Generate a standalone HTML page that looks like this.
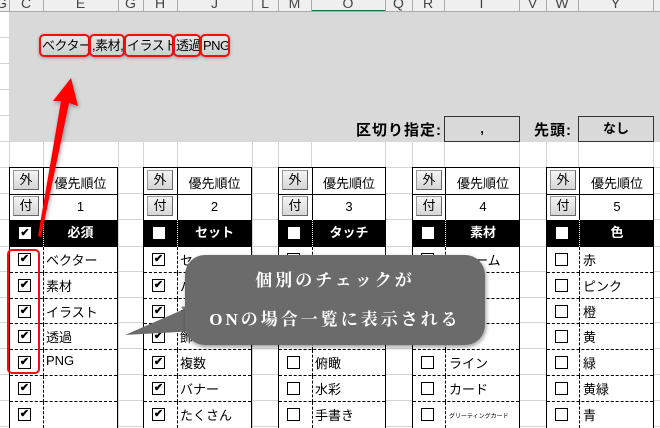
<!DOCTYPE html>
<html><head><meta charset="utf-8"><style>
*{margin:0;padding:0;box-sizing:border-box}
body{width:660px;height:428px;overflow:hidden;position:relative;background:#fff;font-family:"Liberation Sans","Noto Sans CJK JP",sans-serif;font-size:12px;color:#000}
.hl{position:absolute;left:0;width:660px;height:1px;background:#d4d4d4}
.vl{position:absolute;top:0;height:428px;width:1px;background:#d4d4d4}
.colh{position:absolute;top:0;left:0;width:660px;height:12px;background:#efefef;border-bottom:1px solid #ababab;overflow:hidden}
.colh span{position:absolute;top:-5px;font-size:14px;color:#444;text-align:center}
.colh i{position:absolute;top:0;height:12px;width:1px;background:#ababab}
.gray{position:absolute;left:9px;top:12px;width:651px;height:130px;background:#d9d9d9}
.tag{position:absolute;top:34px;height:23px;border:2px solid #f01010;border-radius:5px;background:linear-gradient(#e8e8e8,#cfcfcf);font-size:13px;line-height:19px;padding-left:1px;white-space:nowrap;overflow:hidden;letter-spacing:-0.5px;box-shadow:0 1px 3px rgba(0,0,0,.3)}
.lbl{position:absolute;top:119px;font-size:15px;font-weight:bold;letter-spacing:1px}
.box{position:absolute;top:116px;height:26px;border:1px solid #333;background:#d9d9d9;text-align:center;font-weight:bold;font-size:13px;line-height:24px}
.tb{position:absolute;top:167px;width:109px;height:261px;border:1.5px solid #000;border-bottom:none;background:#fff}
.tb .div{position:absolute;left:33px;top:0;width:1px;height:52px;background:#000}
.btn{position:absolute;left:3px;width:26px;height:20px;background:linear-gradient(#f4f4f4,#d6d6d6);border:1px solid #999;border-right-color:#666;border-bottom-color:#666;font-size:13px;text-align:center;line-height:18px}
.h1{position:absolute;left:34px;right:0;text-align:center;font-size:13px}
.hd{position:absolute;left:0;right:0;top:52px;height:27px;background:#000;color:#fff;font-weight:bold;font-size:13px}
.hd .t{position:absolute;left:34px;right:0;text-align:center;line-height:26px}
.hd .dv{position:absolute;left:33px;top:0;height:27px;border-left:1px dotted #fff}
.hd .c{position:absolute;left:9px;top:7px;width:12px;height:12px;background:#fff;color:#000;font-size:11px;line-height:12px;text-align:center}
.r{position:absolute;left:0;right:0;height:26px;border-top:1px dashed #000}
.r .dv{position:absolute;left:33px;top:0;height:26px;border-left:1px dashed #000}
.r .c{position:absolute;left:8px;top:6px;width:13px;height:13px;border:1.2px solid #000;font-size:11px;line-height:11px;text-align:center;font-weight:bold}
.r .t{position:absolute;left:36px;top:3px;font-size:13px;white-space:nowrap}
</style></head><body>
<div class="hl" style="top:37px"></div><div class="hl" style="top:63px"></div><div class="hl" style="top:89px"></div><div class="hl" style="top:115px"></div><div class="hl" style="top:141px"></div><div class="hl" style="top:167px"></div><div class="hl" style="top:193px"></div><div class="hl" style="top:219px"></div><div class="hl" style="top:246px"></div><div class="hl" style="top:271px"></div><div class="hl" style="top:297px"></div><div class="hl" style="top:322px"></div><div class="hl" style="top:348px"></div><div class="hl" style="top:374px"></div><div class="hl" style="top:400px"></div><div class="hl" style="top:426px"></div>
<div class="vl" style="left:9px"></div><div class="vl" style="left:43px"></div><div class="vl" style="left:118px"></div><div class="vl" style="left:143px"></div><div class="vl" style="left:177px"></div><div class="vl" style="left:252px"></div><div class="vl" style="left:278px"></div><div class="vl" style="left:311px"></div><div class="vl" style="left:385px"></div><div class="vl" style="left:412px"></div><div class="vl" style="left:444px"></div><div class="vl" style="left:519px"></div><div class="vl" style="left:546px"></div><div class="vl" style="left:578px"></div><div class="vl" style="left:653px"></div>
<div class="colh">
<i style="left:9px"></i><i style="left:43px"></i><i style="left:118px"></i><i style="left:143px"></i><i style="left:177px"></i><i style="left:252px"></i><i style="left:278px"></i><i style="left:311px"></i><i style="left:385px"></i><i style="left:412px"></i><i style="left:444px"></i><i style="left:519px"></i><i style="left:546px"></i><i style="left:578px"></i><i style="left:653px"></i>
<span style="left:-4px;width:10px">G</span><span style="left:9px;width:34px">C</span><span style="left:43px;width:75px">E</span><span style="left:118px;width:25px">G</span><span style="left:143px;width:34px">H</span><span style="left:177px;width:75px">J</span><span style="left:252px;width:26px">L</span><span style="left:278px;width:33px">M</span><span style="left:311px;width:74px">O</span><span style="left:385px;width:27px">Q</span><span style="left:412px;width:32px">R</span><span style="left:444px;width:75px">I</span><span style="left:519px;width:27px">V</span><span style="left:546px;width:32px">W</span><span style="left:578px;width:75px">Y</span>
<div style="position:absolute;left:312px;top:10px;width:73px;height:2px;background:#217346"></div>
</div>
<div class="gray"></div>
<div class="tag" style="left:39px;width:51px">ベクター</div>
<div class="tag" style="left:89px;width:36px">,素材,</div>
<div class="tag" style="left:124px;width:50px">イラスト</div>
<div class="tag" style="left:173px;width:28px">透過</div>
<div class="tag" style="left:200px;width:30px">PNG</div>
<div class="lbl" style="left:356px">区切り指定:</div>
<div class="box" style="left:444px;width:76px">,</div>
<div class="lbl" style="left:534px">先頭:</div>
<div class="box" style="left:578px;width:76px">なし</div>

<div class="tb" style="left:9px">
<div class="div"></div>
<div class="btn" style="top:2px">外</div><div class="h1" style="top:5px">優先順位</div>
<div style="position:absolute;left:0;right:0;top:26px;border-top:1px solid #000"></div>
<div class="btn" style="top:28px">付</div><div class="h1" style="top:31px">1</div>
<div class="hd"><div class="c">✔</div><div class="dv"></div><div class="t">必須</div></div>
<div class="r" style="top:79px;border-top:none"><div class="c">✔</div><div class="dv"></div><div class="t">ベクター</div></div>
<div class="r" style="top:104px"><div class="c">✔</div><div class="dv"></div><div class="t">素材</div></div>
<div class="r" style="top:130px"><div class="c">✔</div><div class="dv"></div><div class="t">イラスト</div></div>
<div class="r" style="top:155px"><div class="c">✔</div><div class="dv"></div><div class="t">透過</div></div>
<div class="r" style="top:181px"><div class="c">✔</div><div class="dv"></div><div class="t">PNG</div></div>
<div class="r" style="top:207px"><div class="c">✔</div><div class="dv"></div><div class="t"></div></div>
<div class="r" style="top:233px"><div class="c">✔</div><div class="dv"></div><div class="t"></div></div>
</div>
<div class="tb" style="left:143px">
<div class="div"></div>
<div class="btn" style="top:2px">外</div><div class="h1" style="top:5px">優先順位</div>
<div style="position:absolute;left:0;right:0;top:26px;border-top:1px solid #000"></div>
<div class="btn" style="top:28px">付</div><div class="h1" style="top:31px">2</div>
<div class="hd"><div class="c"></div><div class="dv"></div><div class="t">セット</div></div>
<div class="r" style="top:79px;border-top:none"><div class="c">✔</div><div class="dv"></div><div class="t">セット</div></div>
<div class="r" style="top:104px"><div class="c">✔</div><div class="dv"></div><div class="t">パーツ</div></div>
<div class="r" style="top:130px"><div class="c">✔</div><div class="dv"></div><div class="t">素材</div></div>
<div class="r" style="top:155px"><div class="c">✔</div><div class="dv"></div><div class="t">飾り</div></div>
<div class="r" style="top:181px"><div class="c">✔</div><div class="dv"></div><div class="t">複数</div></div>
<div class="r" style="top:207px"><div class="c">✔</div><div class="dv"></div><div class="t">バナー</div></div>
<div class="r" style="top:233px"><div class="c">✔</div><div class="dv"></div><div class="t">たくさん</div></div>
</div>
<div class="tb" style="left:278px;width:108px">
<div class="div"></div>
<div class="btn" style="top:2px">外</div><div class="h1" style="top:5px">優先順位</div>
<div style="position:absolute;left:0;right:0;top:26px;border-top:1px solid #000"></div>
<div class="btn" style="top:28px">付</div><div class="h1" style="top:31px">3</div>
<div class="hd"><div class="c"></div><div class="dv"></div><div class="t">タッチ</div></div>
<div class="r" style="top:79px;border-top:none"><div class="c"></div><div class="dv"></div><div class="t">アイコン</div></div>
<div class="r" style="top:104px"><div class="c"></div><div class="dv"></div><div class="t">線画</div></div>
<div class="r" style="top:130px"><div class="c"></div><div class="dv"></div><div class="t">シンプル</div></div>
<div class="r" style="top:155px"><div class="c"></div><div class="dv"></div><div class="t">リアル</div></div>
<div class="r" style="top:181px"><div class="c"></div><div class="dv"></div><div class="t">俯瞰</div></div>
<div class="r" style="top:207px"><div class="c"></div><div class="dv"></div><div class="t">水彩</div></div>
<div class="r" style="top:233px"><div class="c"></div><div class="dv"></div><div class="t">手書き</div></div>
</div>
<div class="tb" style="left:412px;width:108px">
<div class="div" style="left:32px"></div>
<div class="btn" style="top:2px">外</div><div class="h1" style="top:5px">優先順位</div>
<div style="position:absolute;left:0;right:0;top:26px;border-top:1px solid #000"></div>
<div class="btn" style="top:28px">付</div><div class="h1" style="top:31px">4</div>
<div class="hd"><div class="c"></div><div class="dv" style="left:32px"></div><div class="t">素材</div></div>
<div class="r" style="top:79px;border-top:none"><div class="c"></div><div class="dv" style="left:32px"></div><div class="t">フレーム</div></div>
<div class="r" style="top:104px"><div class="c"></div><div class="dv" style="left:32px"></div><div class="t">枠</div></div>
<div class="r" style="top:130px"><div class="c"></div><div class="dv" style="left:32px"></div><div class="t">背景</div></div>
<div class="r" style="top:155px"><div class="c"></div><div class="dv" style="left:32px"></div><div class="t">囲み</div></div>
<div class="r" style="top:181px"><div class="c"></div><div class="dv" style="left:32px"></div><div class="t">ライン</div></div>
<div class="r" style="top:207px"><div class="c"></div><div class="dv" style="left:32px"></div><div class="t">カード</div></div>
<div class="r" style="top:233px"><div class="c"></div><div class="dv" style="left:32px"></div><div class="t" style="font-size:6px;top:9px">グリーティングカード</div></div>
</div>
<div class="tb" style="left:546px;width:108px">
<div class="div" style="left:32px"></div>
<div class="btn" style="top:2px">外</div><div class="h1" style="top:5px">優先順位</div>
<div style="position:absolute;left:0;right:0;top:26px;border-top:1px solid #000"></div>
<div class="btn" style="top:28px">付</div><div class="h1" style="top:31px">5</div>
<div class="hd"><div class="c"></div><div class="dv" style="left:32px"></div><div class="t">色</div></div>
<div class="r" style="top:79px;border-top:none"><div class="c"></div><div class="dv" style="left:32px"></div><div class="t">赤</div></div>
<div class="r" style="top:104px"><div class="c"></div><div class="dv" style="left:32px"></div><div class="t">ピンク</div></div>
<div class="r" style="top:130px"><div class="c"></div><div class="dv" style="left:32px"></div><div class="t">橙</div></div>
<div class="r" style="top:155px"><div class="c"></div><div class="dv" style="left:32px"></div><div class="t">黄</div></div>
<div class="r" style="top:181px"><div class="c"></div><div class="dv" style="left:32px"></div><div class="t">緑</div></div>
<div class="r" style="top:207px"><div class="c"></div><div class="dv" style="left:32px"></div><div class="t">黄緑</div></div>
<div class="r" style="top:233px"><div class="c"></div><div class="dv" style="left:32px"></div><div class="t">青</div></div>
</div>

<div style="position:absolute;left:7px;top:249px;width:33px;height:125px;border:2px solid #f01010;border-radius:5px"></div>
<svg style="position:absolute;left:0;top:0" width="660" height="428">
<polygon points="71,78 78,106 69,103 41,237 38,236 61,101 53,101" fill="#ff0000" style="filter:drop-shadow(1px 2px 2px rgba(0,0,0,.35))"/>
<polygon points="125,335 205,300 215,330" fill="#6b6b6b"/>
</svg>
<div style="position:absolute;left:185px;top:255px;width:300px;height:90px;background:#6b6b6b;border-radius:20px;box-shadow:1px 2px 4px rgba(0,0,0,.4);color:#fff;font-family:'Liberation Serif','Noto Serif CJK SC',serif;font-weight:bold;font-size:17px;letter-spacing:3px;text-align:center">
<div style="position:absolute;left:0;right:0;top:11px">個別のチェックが</div>
<div style="position:absolute;left:0;right:0;top:50px">ONの場合一覧に表示される</div>
</div>
</body></html>
